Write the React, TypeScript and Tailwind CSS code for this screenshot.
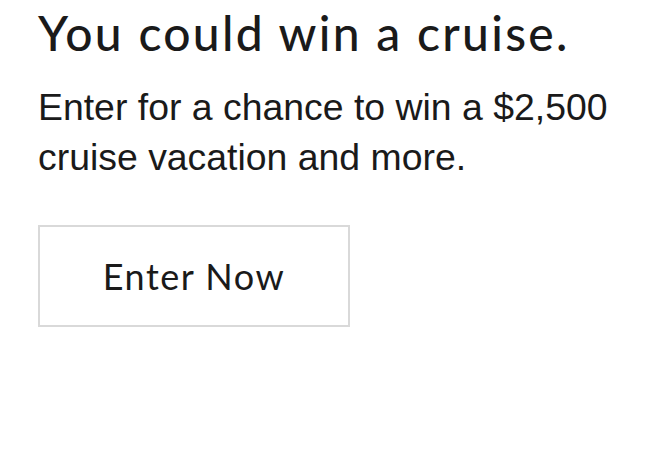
export default function App() {
  return (
    <div className="w-[660px] h-[460px] bg-white px-[38px] pt-[5px] text-[#1a1a1a]">
      <h1 className="font-['Lato',sans-serif] text-[48px] leading-[56px] tracking-[2.3px] font-medium">
        You could win a cruise.
      </h1>
      <p className="mt-[21px] font-['Liberation_Sans',Arial,sans-serif] text-[37.4px] leading-[50px]">
        Enter for a chance to win a $2,500 cruise vacation and more.
      </p>
      <button className="mt-[43px] w-[312px] h-[102px] border-2 border-[#d9d9d9] bg-white font-['Lato',sans-serif] text-[36px] tracking-[1.5px]">
        Enter Now
      </button>
    </div>
  );
}
